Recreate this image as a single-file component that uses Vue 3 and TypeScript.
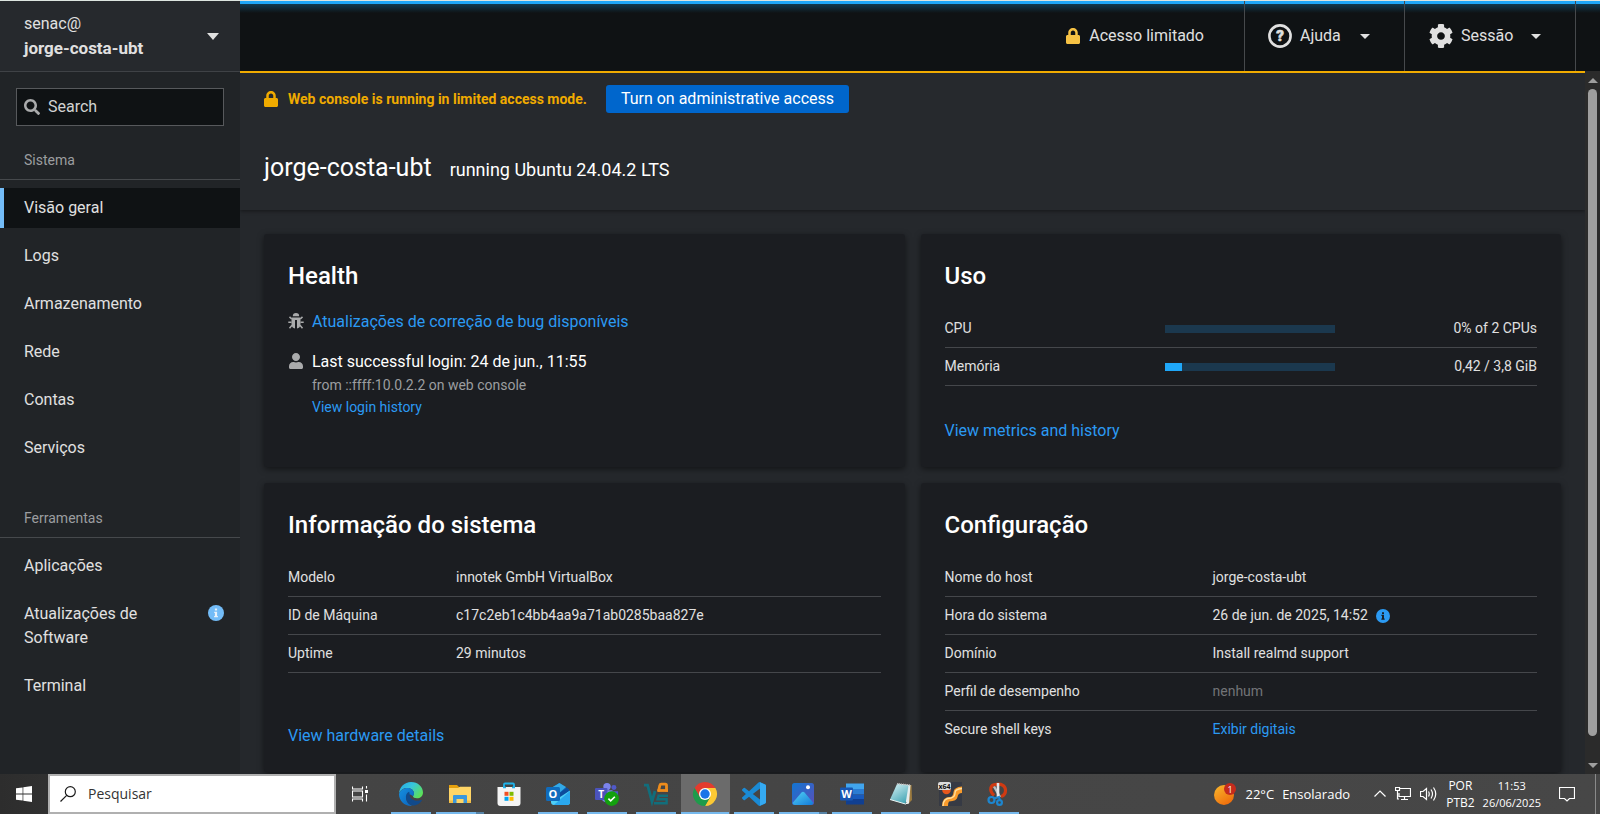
<script setup lang="ts">
import { ref } from 'vue'

interface NavItem {
  label: string
  info?: boolean
}
interface NavSection {
  title: string
  items: NavItem[]
}
interface Row {
  label: string
  value: string
  kind?: 'link' | 'muted' | 'info'
}
interface Usage {
  label: string
  percent: number
  value: string
}

const sections: NavSection[] = [
  {
    title: 'Sistema',
    items: [
      { label: 'Visão geral' },
      { label: 'Logs' },
      { label: 'Armazenamento' },
      { label: 'Rede' },
      { label: 'Contas' },
      { label: 'Serviços' },
    ],
  },
  {
    title: 'Ferramentas',
    items: [
      { label: 'Aplicações' },
      { label: 'Atualizações de Software', info: true },
      { label: 'Terminal' },
    ],
  },
]

const usage: Usage[] = [
  { label: 'CPU', percent: 0, value: '0% of 2 CPUs' },
  { label: 'Memória', percent: 10, value: '0,42 / 3,8 GiB' },
]

const systemInfo: Row[] = [
  { label: 'Modelo', value: 'innotek GmbH VirtualBox' },
  { label: 'ID de Máquina', value: 'c17c2eb1c4bb4aa9a71ab0285baa827e' },
  { label: 'Uptime', value: '29 minutos' },
]

const configuration: Row[] = [
  { label: 'Nome do host', value: 'jorge-costa-ubt' },
  { label: 'Hora do sistema', value: '26 de jun. de 2025, 14:52', kind: 'info' },
  { label: 'Domínio', value: 'Install realmd support' },
  { label: 'Perfil de desempenho', value: 'nenhum', kind: 'muted' },
  { label: 'Secure shell keys', value: 'Exibir digitais', kind: 'link' },
]

const active = ref('Visão geral')
const lockPath =
  'M400 224h-24v-72C376 68.2 307.8 0 224 0S72 68.2 72 152v72H48c-26.5 0-48 21.5-48 48v192c0 26.5 21.5 48 48 48h352c26.5 0 48-21.5 48-48V272c0-26.5-21.5-48-48-48zm-104 0H152v-72c0-39.7 32.3-72 72-72s72 32.3 72 72v72z'
</script>

<template>
  <div class="screen">
    <div class="cockpit">
      <aside class="sidebar">
        <button class="host" type="button">
          <span class="host-name">senac@<strong>jorge-costa-ubt</strong></span>
          <i class="caret big"></i>
        </button>
        <label class="search">
          <svg viewBox="0 0 512 512" aria-hidden="true"><path d="M505 442.7L405.3 343c-4.5-4.5-10.6-7-17-7H372c27.6-35.3 44-79.7 44-128C416 93.1 322.9 0 208 0S0 93.1 0 208s93.1 208 208 208c48.3 0 92.7-16.4 128-44v16.3c0 6.4 2.5 12.5 7 17l99.7 99.7c9.4 9.4 24.6 9.4 33.9 0l28.3-28.3c9.4-9.4 9.4-24.6.1-34zM208 336c-70.7 0-128-57.2-128-128 0-70.7 57.2-128 128-128 70.7 0 128 57.2 128 128 0 70.7-57.2 128-128 128z" /></svg>
          <input type="search" placeholder="Search" aria-label="Search" />
        </label>
        <nav>
          <section v-for="s in sections" :key="s.title" class="nav-section">
            <h2>{{ s.title }}</h2>
            <a
              v-for="item in s.items"
              :key="item.label"
              href="#"
              :class="{ active: active === item.label }"
              @click.prevent="active = item.label"
            >
              <span>{{ item.label }}</span>
              <svg v-if="item.info" class="nav-info" viewBox="0 0 16 16" aria-hidden="true">
                <circle cx="8" cy="8" r="8" fill="#73bcf7" />
                <path d="M6.9 3.6h2.2v2H6.9zM6.2 6.7h2.9v4.2h.8v1.3H6.1v-1.3h.8V8h-.7z" fill="#e8f2fa" />
              </svg>
            </a>
          </section>
        </nav>
      </aside>

      <div class="workspace">
        <header class="masthead">
          <button type="button" class="access">
            <svg class="lock" viewBox="0 0 448 512" aria-hidden="true"><path :d="lockPath" fill="#f6c244" /></svg>
            Acesso limitado
          </button>
          <button type="button" class="menu help">
            <svg viewBox="0 0 24 24" aria-hidden="true">
              <circle cx="12" cy="12" r="10.6" fill="none" stroke="#e0e0e0" stroke-width="2.6" />
              <text x="12" y="17.3" text-anchor="middle" font-size="15" font-weight="900" fill="#e0e0e0" stroke="#e0e0e0" stroke-width=".6">?</text>
            </svg>
            Ajuda
            <i class="caret"></i>
          </button>
          <button type="button" class="menu session">
            <svg viewBox="8 8 496 496" aria-hidden="true"><path fill="#e0e0e0" d="M487.4 315.7l-42.6-24.6c4.3-23.2 4.3-47 0-70.2l42.6-24.6c4.9-2.8 7.1-8.6 5.5-14-11.1-35.6-30-67.8-54.7-94.6-3.8-4.1-10-5.1-14.8-2.3L380.8 110c-17.9-15.4-38.5-27.3-60.8-35.1V25.8c0-5.6-3.9-10.5-9.4-11.7-36.7-8.2-74.3-7.8-109.2 0-5.5 1.2-9.4 6.1-9.4 11.7V75c-22.2 7.9-42.8 19.8-60.8 35.1L88.7 85.5c-4.9-2.8-11-1.9-14.8 2.3-24.7 26.7-43.6 58.9-54.7 94.6-1.7 5.4.6 11.2 5.5 14L67.3 221c-4.3 23.2-4.3 47 0 70.2l-42.6 24.6c-4.9 2.8-7.1 8.6-5.5 14 11.1 35.6 30 67.8 54.7 94.6 3.8 4.1 10 5.1 14.8 2.3l42.6-24.6c17.9 15.4 38.5 27.3 60.8 35.1v49.2c0 5.6 3.9 10.5 9.4 11.7 36.7 8.2 74.3 7.8 109.2 0 5.5-1.2 9.4-6.1 9.4-11.7v-49.2c22.2-7.9 42.8-19.8 60.8-35.1l42.6 24.6c4.9 2.8 11 1.9 14.8-2.3 24.7-26.7 43.6-58.9 54.7-94.6 1.5-5.5-.7-11.3-5.6-14.1zM256 336c-44.1 0-80-35.9-80-80s35.9-80 80-80 80 35.9 80 80-35.9 80-80 80z" /></svg>
            Sessão
            <i class="caret"></i>
          </button>
        </header>

        <div class="viewport">
          <main class="page">
            <div class="page-head">
              <div class="banner">
                <svg class="lock" viewBox="0 0 448 512" aria-hidden="true"><path :d="lockPath" fill="#f0ab00" /></svg>
                <strong>Web console is running in limited access mode.</strong>
                <button type="button">Turn on administrative access</button>
              </div>
              <div class="title">
                <h1>jorge-costa-ubt</h1>
                <span>running Ubuntu 24.04.2 LTS</span>
              </div>
            </div>

            <div class="cards">
              <article class="card">
                <h2>Health</h2>
                <ul class="health">
                  <li>
                    <svg viewBox="0 0 16 16" aria-hidden="true">
                      <path d="M4.8 3.3a3.2 3.2 0 0 1 6.400 0z" />
                      <path d="M3.500 4.400h9v6.800c0 2.300-1.500 4-3.500 4.400V7H7v8.600c-2-.4-3.500-2.100-3.500-4.400z" />
                      <path d="M3.700 6 1.500 3.900M12.300 6l2.200-2.100M3.500 9.200H.3M12.500 9.200h3.200M4 12.300l-2.500 3M12 12.300l2.500 3" fill="none" stroke="#aaabac" stroke-width="1.500" />
                    </svg>
                    <a href="#">Atualizações de correção de bug disponíveis</a>
                  </li>
                  <li>
                    <svg viewBox="0 0 448 512" aria-hidden="true"><path d="M224 256c70.7 0 128-57.300 128-128S294.700 0 224 0 96 57.300 96 128s57.300 128 128 128zm89.600 32h-16.700c-22.200 10.200-46.900 16-72.900 16s-50.600-5.800-72.900-16h-16.700C60.200 288 0 348.200 0 422.400V464c0 26.500 21.500 48 48 48h352c26.500 0 48-21.500 48-48v-41.600c0-74.200-60.200-134.400-134.400-134.400z" /></svg>
                    <div>
                      <p class="login">Last successful login: 24 de jun., 11:55</p>
                      <p class="small from">from ::ffff:10.0.2.2 on web console</p>
                      <p class="small"><a href="#">View login history</a></p>
                    </div>
                  </li>
                </ul>
              </article>

              <article class="card">
                <h2>Uso</h2>
                <table class="usage">
                  <tbody>
                    <tr v-for="u in usage" :key="u.label">
                      <th scope="row">{{ u.label }}</th>
                      <td class="meter-cell">
                        <div class="meter"><div :style="{ width: u.percent + '%' }"></div></div>
                      </td>
                      <td class="amount">{{ u.value }}</td>
                    </tr>
                  </tbody>
                </table>
                <footer><a href="#">View metrics and history</a></footer>
              </article>

              <article class="card">
                <h2>Informação do sistema</h2>
                <table class="details">
                  <tbody>
                    <tr v-for="r in systemInfo" :key="r.label">
                      <th scope="row">{{ r.label }}</th>
                      <td>{{ r.value }}</td>
                    </tr>
                  </tbody>
                </table>
                <footer><a href="#">View hardware details</a></footer>
              </article>

              <article class="card">
                <h2>Configuração</h2>
                <table class="details config">
                  <tbody>
                    <tr v-for="r in configuration" :key="r.label">
                      <th scope="row">{{ r.label }}</th>
                      <td>
                        <a v-if="r.kind === 'link'" href="#">{{ r.value }}</a>
                        <span v-else-if="r.kind === 'muted'" class="muted">{{ r.value }}</span>
                        <span v-else-if="r.kind === 'info'" class="with-info">
                          {{ r.value }}
                          <svg viewBox="0 0 16 16" aria-hidden="true">
                            <circle cx="8" cy="8" r="8" fill="#2b9af3" />
                            <path d="M6.900 3.600h2.200v2H6.900zM6.200 6.700h2.900v4.200h.8v1.300H6.100v-1.300h.8V8h-.7z" fill="#1b1d21" />
                          </svg>
                        </span>
                        <template v-else>{{ r.value }}</template>
                      </td>
                    </tr>
                  </tbody>
                </table>
              </article>
            </div>
          </main>
          <div class="scrollbar" aria-hidden="true">
            <i class="arrow up"></i>
            <div class="track"><div class="thumb"></div></div>
            <i class="arrow down"></i>
          </div>
        </div>
      </div>
    </div>

    <div class="taskbar">
      <button type="button" class="start" aria-label="Iniciar">
        <svg viewBox="0 0 16 16"><path fill="#fff" d="M0 2.300 6.600 1.400v6.200H0zM7.300 1.300 16 0v7.600H7.300zM0 8.400h6.600v6.200L0 13.700zM7.300 8.400H16V16l-8.700-1.300z" /></svg>
      </button>
      <label class="find">
        <svg viewBox="0 0 16 16" fill="none" stroke="#1b1b1b" stroke-width="1.200"><circle cx="10.300" cy="5.700" r="5" /><path d="M6.700 9.300.5 15.500" /></svg>
        <input type="text" placeholder="Pesquisar" aria-label="Pesquisar" />
      </label>
      <button type="button" class="taskview" aria-label="Visão de tarefas">
        <svg viewBox="0 0 16 16" fill="none" stroke="#fff" stroke-width="1.100"><path d="M.5.500V3H10.500V.5M.5 15.500V13H10.500V15.500M.5 5h10v6H.5zM14.500 0v2.500M14.500 8.500V15.500" /><path d="M13 4h3v3h-3z" fill="#fff" stroke="none" /></svg>
      </button>

      <div class="apps">
        <button type="button" class="app" aria-label="Edge">
          <svg viewBox="0 0 24 24">
            <defs>
              <linearGradient id="edge-top" x1="0" y1="0" x2="1" y2=".6"><stop offset="0" stop-color="#1fa7e8" /><stop offset=".5" stop-color="#38c6dc" /><stop offset="1" stop-color="#5be05c" /></linearGradient>
              <linearGradient id="edge-low" x1="0" y1="0" x2="1" y2="1"><stop offset="0" stop-color="#1590e0" /><stop offset="1" stop-color="#0b61ba" /></linearGradient>
            </defs>
            <path d="M0 11.500C.4 5 5.600 0 12 0c7 0 12 5 12 10.500 0 3.700-2.800 5.800-6 5.800-2.500 0-4-1-4-2 0-.7 1-1.200 1-3C15 8.500 12.300 6 8.600 6 4.500 6 1.300 8 0 11.500z" fill="url(#edge-top)" />
            <path d="M0 12C1 8.500 4.500 6 8.600 6c3.700 0 6.400 2.500 6.400 5.300 0 1.800-1 2.300-1 3-4-3.800-7.500-1-6.700 3 .5 3 3 6 6.700 6.500C6.500 25 0 19.500 0 12z" fill="url(#edge-low)" />
            <path d="M10 9.700c-2.300 1-3.600 3.600-2.900 7 .8 4 4 6.800 8.400 6.800 3.200-.6 5.700-2.300 7.300-5 .2-.5-.2-.8-.6-.6-3.500 1.700-10.500 1-11.500-4.400-.3-1.700.1-2.900-.7-3.800z" fill="#114a8b" />
          </svg>
        </button>
        <button type="button" class="app split" aria-label="Explorador de Arquivos">
          <svg viewBox="0 0 24 24">
            <path d="M1 3h8l2 2h11v4H1z" fill="#e5a00d" />
            <path d="M1 6h9l2-1.200h11V21H1z" fill="#ffd566" />
            <path d="M5 21v-7q0-1 1-1h12q1 0 1 1v7h-3.500v-4h-7v4z" fill="#3a97dc" />
            <path d="M1 18.500h4V21H1zM19 18.500h4V21h-4z" fill="#f2bd45" />
          </svg>
        </button>
        <button type="button" class="app idle" aria-label="Microsoft Store">
          <svg viewBox="0 0 24 24">
            <path d="M7 7V2.500q0-1 1-1h8q1 0 1 1V7" fill="none" stroke="#20b3ea" stroke-width="1.800" />
            <path d="M.5 5h23v16q0 3-3 3h-17q-3 0-3-3z" fill="#f4f4f4" />
            <path d="M7.500 9.800h4v4h-4z" fill="#f25022" /><path d="M12.500 9.800h4v4h-4z" fill="#7fba00" />
            <path d="M7.500 14.800h4v4h-4z" fill="#00a4ef" /><path d="M12.500 14.800h4v4h-4z" fill="#ffb900" />
            <path d="M6 5.500H9M15 5.500H18" stroke="#20b3ea" stroke-width="1.300" />
          </svg>
        </button>
        <button type="button" class="app" aria-label="Outlook">
          <svg viewBox="0 0 24 24">
            <path d="M4 7.500 13 1l10 6.500v5L13 17 4 12z" fill="#1066b5" />
            <path d="M7 4.800 13.500 1 20 5l-9 8H6z" fill="#32a9e7" />
            <path d="M11 13 21 5.500l2.500 2.700-9 9z" fill="#0d4c9c" />
            <path d="M5 14l6 3 13-8.500V20q0 3-3 3H8q-3 0-3-3z" fill="#4fd0f7" />
            <path d="M24 9 8 22.800q.5.200 1 .2h12q3 0 3-3z" fill="#2aa8ee" />
            <rect y="5" width="14" height="14" rx="1.500" fill="#0f6cbd" />
            <text x="7" y="16" text-anchor="middle" font-size="11" font-weight="700" fill="#fff">O</text>
          </svg>
        </button>
        <button type="button" class="app" aria-label="Teams">
          <svg viewBox="0 0 26 26">
            <circle cx="13" cy="5" r="4" fill="#7b83eb" /><circle cx="20.500" cy="6" r="2.700" fill="#5059c9" />
            <path d="M8 9h11v8q-1 5-6 5t-6-4z" fill="#7b83eb" /><path d="M18.500 10H25v5q-1 3-4 3.500h-2.500z" fill="#5059c9" />
            <rect y="6.500" width="13.500" height="13" rx="1.200" fill="#4b53bc" />
            <text x="6.700" y="17" text-anchor="middle" font-size="11" font-weight="700" fill="#fff">T</text>
            <circle cx="18" cy="18" r="8" fill="#13a10e" />
            <path d="m14.500 18 2.500 2.500 4.500-4.500" fill="none" stroke="#fff" stroke-width="1.800" />
          </svg>
        </button>
        <button type="button" class="app" aria-label="VirtualBox">
          <svg viewBox="0 0 24 24" fill="none" stroke-width="2.800">
            <path d="M0 3.200h3.600L8 19.500 11 9" stroke="#116e7c" />
            <path d="M24 13.700H14.600l-1 3.500h9V21.300H10" stroke="#116e7c" stroke-width="2.400" />
            <path d="M14.500 9.500 15.800 3.500q.3-1.300 1.500-1.300h4q1.200 0 1.200 1.300v6" stroke="#ee8c1c" />
            <path d="M13.500 8.500H24" stroke="#ee8c1c" />
          </svg>
        </button>
        <button type="button" class="app current" aria-label="Chrome">
          <svg viewBox="0 0 24 24">
            <path d="M1.600 6A12 12 0 0 1 22.400 6H12L6.800 15Z" fill="#e33b2e" />
            <path d="M22.400 6A12 12 0 0 1 12 24L17.200 15 12 6Z" fill="#fcc934" />
            <path d="M12 24A12 12 0 0 1 1.600 6L6.800 15H17.200Z" fill="#1e9b4b" />
            <circle cx="12" cy="12" r="6" fill="#fff" /><circle cx="12" cy="12" r="4.700" fill="#1a73e8" />
          </svg>
        </button>
        <button type="button" class="app" aria-label="Visual Studio Code">
          <svg viewBox="0 0 24 24">
            <path fill="#1a8ad4" d="M23.150 2.587L18.210.210a1.494 1.494 0 0 0-1.705.290l-9.460 8.630-4.120-3.128a.999.999 0 0 0-1.276.057L.327 7.261A1 1 0 0 0 .326 8.740L3.899 12 .326 15.260a1 1 0 0 0 .001 1.479L1.650 17.940a.999.999 0 0 0 1.276.057l4.120-3.128 9.460 8.630a1.492 1.492 0 0 0 1.704.290l4.942-2.377A1.500 1.500 0 0 0 24 20.060V3.939a1.500 1.500 0 0 0-.850-1.352zm-5.146 14.861L10.826 12l7.178-5.448v10.896z" />
            <path fill="#35aaf2" d="M18 .2 23.150 2.600Q24 3 24 4v16q0 1-.850 1.400L18 23.800z" />
          </svg>
        </button>
        <button type="button" class="app split" aria-label="Fotos">
          <svg viewBox="0 0 24 24">
            <defs><linearGradient id="photo-sky" x2="1" y2="1"><stop offset="0" stop-color="#1176d2" /><stop offset="1" stop-color="#5a4fb8" /></linearGradient><linearGradient id="photo-hill" x2="1" y2="1"><stop offset="0" stop-color="#52d3f5" /><stop offset="1" stop-color="#1379d8" /></linearGradient></defs>
            <rect x="1" y="1" width="22" height="22" rx="2.500" fill="url(#photo-sky)" />
            <path d="M1.500 21 10.500 10.500q1.500-1.500 3 0L22.500 21q-.8 2-2.500 2H4q-2 0-2.500-2z" fill="url(#photo-hill)" />
            <circle cx="17" cy="5.200" r="2" fill="#fff" />
          </svg>
        </button>
        <button type="button" class="app" aria-label="Word">
          <svg viewBox="0 0 24 24">
            <path d="M6 1.500h18V7H6z" fill="#41a5ee" /><path d="M6 7h18v5.500H6z" fill="#2b7cd3" /><path d="M6 12.500h18V17H6z" fill="#185abd" /><path d="M6 17h18v5.500H6z" fill="#103f91" />
            <rect y="5.500" width="13" height="13" rx="1" fill="#1756b3" />
            <text x="6.500" y="16" text-anchor="middle" font-size="11" font-weight="700" fill="#fff">W</text>
          </svg>
        </button>
        <button type="button" class="app" aria-label="Bloco de Notas">
          <svg viewBox="0 0 24 24">
            <defs><linearGradient id="pad" x2=".6" y2="1"><stop offset="0" stop-color="#d9f3f6" /><stop offset="1" stop-color="#4ba9b8" /></linearGradient></defs>
            <path d="M20 3h2.500l.5 15-4 4z" fill="#9c7b3f" /><path d="M8.500 1.500 21.500 3 20 21.500l-2 .5z" fill="#e6ecec" />
            <path d="M8 2 19.500 3.500 16.500 22 1 17.500z" fill="url(#pad)" />
            <path d="M8 1.800 21 3" stroke="#b8b8b8" stroke-width="1.500" stroke-dasharray="1 1" /><path d="M1 17.500 16.500 22l3-1.500" fill="none" stroke="#eef6f6" />
          </svg>
        </button>
        <button type="button" class="app" aria-label="Ferramenta x64">
          <svg viewBox="0 0 24 24">
            <path d="M1 0h23v24H1z" fill="#363a44" />
            <path d="M4 24q0-9 8-9 3 0 3.500-5T24 4.500V11q-4 0-4.500 4T11 19.500q-1 1-1 4.500z" fill="#fa9b2b" /><path d="M5 24q0-8 8-8 4-1 4-5t7-4.500" fill="none" stroke="#ffe0a0" stroke-width="1.300" />
            <circle cx="8.500" cy="8" r="4.300" fill="#e7571d" />
            <rect width="13" height="8" rx="2" fill="#dcdcdc" />
            <text x="6.500" y="7" text-anchor="middle" font-size="7" font-weight="700" fill="#111">x64</text>
          </svg>
        </button>
        <button type="button" class="app" aria-label="Ferramenta de Captura">
          <svg viewBox="0 0 24 24" fill="none">
            <path d="M7 13.500C1.500 8 3.500 2.500 9 2.300q9-.8 9.500 5.700.2 5-4.500 6.500" stroke="#cf3a12" stroke-width="3.200" />
            <path d="M7 4.500 13 15" stroke="#b9bfc4" stroke-width="2.400" /><path d="M11 1v15" stroke="#e4e7ea" stroke-width="2.600" />
            <circle cx="4.500" cy="18" r="3" stroke="#1d86cf" stroke-width="2.200" /><circle cx="12.500" cy="20.500" r="2.400" stroke="#1d86cf" stroke-width="2.200" /><path d="m7 16.500 5-1.500 1 3" stroke="#1d86cf" stroke-width="2" />
          </svg>
        </button>
      </div>

      <div class="tray">
        <button type="button" class="weather">
          <svg viewBox="0 0 24 24" aria-hidden="true">
            <defs><linearGradient id="sun" x1="0" y1="0" x2=".7" y2="1"><stop offset="0" stop-color="#f9b92d" /><stop offset="1" stop-color="#ef6c0c" /></linearGradient></defs>
            <circle cx="10" cy="13" r="10" fill="url(#sun)" /><circle cx="16" cy="7" r="6" fill="#c52b1c" />
            <text x="16" y="10.500" text-anchor="middle" font-size="9" fill="#fff">1</text>
          </svg>
          <span>22°C</span><span>Ensolarado</span>
        </button>
        <button type="button" class="tray-icon" aria-label="Ícones ocultos"><svg width="12" height="16" viewBox="0 0 12 16"><path d="m.5 10.500 5.500-5.500 5.500 5.500" /></svg></button>
        <button type="button" class="tray-icon" aria-label="Rede"><svg width="16" height="16" viewBox="0 0 16 16"><path d="M5 2.500h10.500v8H4V7M9.500 10.500v3M6 13.500h7M.5 1.500h4v3h-4zM2.500 4.500V13H4" /></svg></button>
        <button type="button" class="tray-icon" aria-label="Volume"><svg width="17" height="16" viewBox="0 0 17 16"><path d="M.5 5.500H3l3.500-3v11l-3.500-3H.5zM8.500 5.500q1.500 2.500 0 5M11 3.500q3 4.500 0 9M13.500 1.500q4.500 6.500 0 13" /></svg></button>
        <button type="button" class="stack lang"><span>POR</span><span>PTB2</span></button>
        <button type="button" class="stack clock"><span>11:53</span><span>26/06/2025</span></button>
        <button type="button" class="tray-icon notice" aria-label="Notificações"><svg width="16" height="16" viewBox="0 0 16 16"><path d="M.5 1.500h15v11H10.500L8 15l-2.500-2.500H.5z" /></svg></button>
        <i class="peek"></i>
      </div>
    </div>
  </div>
</template>

<style>
body {
  margin: 0;
  background: #25282c;
}
</style>

<style scoped>
* {
  box-sizing: border-box;
}
.screen {
  display: flex;
  flex-direction: column;
  height: 100vh;
  border-top: 1px solid #dde5e0;
  font-family: Roboto, "Liberation Sans", sans-serif;
  font-size: 16px;
  line-height: 24px;
  color: #e0e0e0;
  overflow: hidden;
}
button,
input {
  font: inherit;
  color: inherit;
  background: none;
  border: 0;
  padding: 0;
  margin: 0;
}
a {
  color: #2b9af3;
  text-decoration: none;
}
h1,
h2,
p,
ul {
  margin: 0;
  padding: 0;
  font-weight: 400;
}
.cockpit {
  display: flex;
  flex: 1;
  min-height: 0;
}
.caret {
  border: 5px solid transparent;
  border-top-color: #e0e0e0;
  border-bottom: 0;
}
.caret.big {
  border-width: 7px 6px 0;
}

.sidebar {
  flex: none;
  width: 240px;
  background: #212427;
  overflow: hidden;
}
.host {
  display: flex;
  align-items: center;
  justify-content: space-between;
  width: 100%;
  height: 71px;
  padding: 0 21px 0 24px;
  background: #26292d;
  border-bottom: 1px solid #3f4246;
  text-align: left;
}
.host strong {
  display: block;
  font-size: 17px;
}
.search {
  display: flex;
  align-items: center;
  gap: 8px;
  height: 38px;
  margin: 16px 16px 24px;
  padding: 0 7px;
  background: #0f1214;
  border: 1px solid #57595c;
}
.search svg {
  flex: none;
  width: 16px;
  height: 16px;
  fill: #aaabac;
}
.search input {
  flex: 1;
  min-width: 0;
  outline: 0;
}
.search input::placeholder {
  color: #d2d2d2;
  opacity: 1;
}
.nav-section {
  padding-bottom: 32px;
}
.nav-section h2 {
  margin-bottom: 8px;
  padding: 0 24px 8px;
  border-bottom: 1px solid #46494c;
  font-size: 14px;
  line-height: 21px;
  color: #9c9ea0;
}
.nav-section a {
  display: flex;
  justify-content: space-between;
  margin-bottom: 8px;
  padding: 8px 16px 8px 24px;
  color: #e0e0e0;
}
.nav-section a.active {
  padding-left: 20px;
  border-left: 4px solid #73bcf7;
  background: #0f1214;
}
.nav-section a span {
  max-width: 150px;
}
.nav-info {
  width: 16px;
  height: 16px;
  margin-top: 3px;
}

.workspace {
  display: flex;
  flex: 1;
  flex-direction: column;
  min-width: 0;
}
.masthead {
  display: flex;
  justify-content: flex-end;
  flex: none;
  height: 70px;
  padding-right: 24px;
  border-top: 3px solid #1fa7f8;
  background: linear-gradient(#113a50, #0f1214 9px);
}
.masthead button {
  display: flex;
  align-items: center;
  margin-top: -3px;
  border-right: 1px solid #46494c;
}
.lock {
  width: 14px;
  height: 16px;
}
.masthead .access {
  gap: 9px;
  padding-right: 40px;
}
.masthead .menu {
  gap: 8px;
  padding: 0 34px 0 23px;
}
.masthead .menu svg {
  width: 24px;
  height: 24px;
}
.masthead .help {
  width: 160px;
}
.masthead .session {
  width: 171px;
  padding-left: 24px;
}
.masthead .menu .caret {
  margin-left: auto;
}
.viewport {
  display: flex;
  flex: 1;
  min-height: 0;
}
.page {
  flex: 1;
  min-width: 0;
  border-top: 2px solid #f0ab00;
  overflow: hidden;
}
.page-head {
  background: #26292d;
  box-shadow: 0 1px 4px rgba(0, 0, 0, 0.45);
}
.banner {
  display: flex;
  align-items: center;
  padding: 12px 24px;
}
.banner strong {
  margin: 0 19px 0 10px;
  font-size: 14px;
  color: #f0ab00;
}
.banner button {
  height: 28px;
  padding: 0 15px;
  border-radius: 3px;
  background: #06c;
  color: #fff;
}
.title {
  display: flex;
  align-items: baseline;
  gap: 18px;
  padding: 25px 24px 24px;
  color: #fff;
}
.title h1 {
  font-size: 25px;
  line-height: 36px;
}
.title span {
  font-size: 18px;
}
.cards {
  display: grid;
  grid-template-columns: 1fr 1fr;
  gap: 16px;
  padding: 24px;
}
.card {
  display: flex;
  flex-direction: column;
  padding: 24px;
  border-radius: 3px;
  background: #1b1d21;
  box-shadow: 0 2px 6px rgba(0, 0, 0, 0.5);
}
.card h2 {
  margin-bottom: 16px;
  font-size: 24px;
  font-weight: 500;
  line-height: 36px;
  color: #fff;
}
.card footer {
  margin-top: auto;
}
.usage + footer {
  padding-top: 33px;
}
.health {
  list-style: none;
}
.health li {
  display: flex;
  gap: 8px;
  margin-bottom: 16px;
}
.health li:last-child {
  margin-bottom: 0;
}
.health svg {
  flex: none;
  width: 16px;
  height: 16px;
  margin-top: 3px;
  fill: #aaabac;
}
.login {
  color: #fff;
}
.small {
  font-size: 14px;
  line-height: 22px;
}
.from {
  color: #9c9ea0;
}
table {
  width: 100%;
  border-collapse: separate;
  border-spacing: 0;
  font-size: 14px;
  line-height: 21px;
}
th,
td {
  padding: 8px 0;
  border-bottom: 1px solid #45474b;
  font-weight: 400;
  text-align: left;
}
.details th {
  width: 168px;
}
.details.config th {
  width: 268px;
}
.config tr:last-child > * {
  border-bottom: 0;
}
.usage th {
  width: 220px;
}
.meter-cell {
  width: 170px;
}
.meter {
  height: 8px;
  background: #1b384e;
}
.meter div {
  height: 100%;
  background: #1fa7f8;
}
.amount {
  text-align: right;
}
.muted {
  color: #727477;
}
.with-info {
  display: flex;
  align-items: center;
  gap: 8px;
}
.with-info svg {
  width: 14px;
  height: 14px;
}

.scrollbar {
  display: flex;
  flex-direction: column;
  align-items: center;
  width: 15px;
  padding: 7px 0 6px;
  background: #2b2b2b;
}
.arrow {
  border: 5px solid transparent;
}
.arrow.up {
  border-top: 0;
  border-bottom-color: #9f9f9f;
}
.arrow.down {
  border-bottom: 0;
  border-top-color: #9f9f9f;
}
.track {
  flex: 1;
  width: 9px;
  padding: 6px 0 27px;
}
.thumb {
  height: 100%;
  border-radius: 5px;
  background: #9f9f9f;
}

.taskbar {
  display: flex;
  flex: none;
  height: 40px;
  background: linear-gradient(90deg, #2d2d2d, #444 340px, #474747);
  color: #fff;
  font-family: "Open Sans", "Noto Sans", sans-serif;
}
.start {
  width: 48px;
}
.start svg,
.taskview svg {
  display: block;
  width: 16px;
  height: 16px;
  margin: auto;
}
.find {
  display: flex;
  align-items: center;
  gap: 12px;
  width: 288px;
  padding: 0 10px;
  border: 2px solid #b0b0b0;
  background: #fff;
  color: #333;
  font-size: 14px;
}
.find svg {
  flex: none;
  width: 16px;
  height: 16px;
}
.find input {
  flex: 1;
  min-width: 0;
  outline: 0;
}
.find input::placeholder {
  color: #333;
  opacity: 1;
}
.taskview {
  width: 48px;
}
.apps {
  display: flex;
  padding-left: 3px;
}
.app {
  display: flex;
  flex-direction: column;
  align-items: center;
  width: 49px;
  padding: 8px 1px 0 0;
}
.app svg {
  width: 24px;
  height: 24px;
  overflow: visible;
}
.app::after {
  content: "";
  width: 40px;
  height: 2px;
  margin-top: auto;
  background: #76b9ed;
}
.app.split::after {
  border-right: 8px solid #5682a5;
}
.app.idle::after {
  background: none;
}
.app.current {
  background: #6b6b6b;
}
.app.current::after {
  width: 100%;
}
.tray {
  display: flex;
  align-items: center;
  margin-left: auto;
}
.weather {
  display: flex;
  align-items: center;
  gap: 8px;
  margin-right: 24px;
  font-size: 13px;
}
.weather svg {
  width: 24px;
  height: 24px;
}
.tray-icon svg {
  display: block;
  fill: none;
  stroke: #fff;
  stroke-width: 1.2px;
}
.tray-icon {
  margin-right: 9px;
}
.stack {
  display: flex;
  flex-direction: column;
  align-items: center;
  font-size: 12px;
  line-height: 17px;
}
.lang {
  margin-right: 8px;
}
.clock {
  margin-right: 18px;
  font-size: 11px;
}
.notice {
  margin-right: 20px;
}
.peek {
  width: 1px;
  height: 40px;
  margin-right: 4px;
  background: #8a8a8a;
}
</style>
